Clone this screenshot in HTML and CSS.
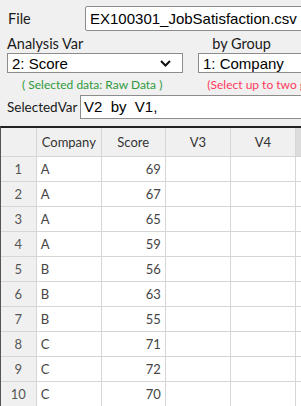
FILE: index.html
```html
<!DOCTYPE html>
<html lang="en">
<head>
    <meta charset="UTF-8">
    <meta name="viewport" content="width=device-width, initial-scale=1.0">
    <title>Data Sheet</title>
    <link rel="stylesheet" href="styles.css">
</head>
<body>
    <div class="panel">
        <div class="file-row">
            <span class="label file-label">File</span>
            <div class="textbox file-box">EX100301_JobSatisfaction.csv</div>
        </div>

        <div class="caption-row">
            <span class="label">Analysis Var</span>
            <span class="label group-label">by Group</span>
        </div>

        <div class="select-row">
            <div class="select var-select">
                <span>2: Score</span>
                <svg class="chevron" width="11" height="7" viewBox="0 0 11 7">
                    <polyline points="1,1 5.5,5.5 10,1" fill="none" stroke="#111" stroke-width="2"/>
                </svg>
            </div>
            <div class="select group-select">
                <span>1: Company</span>
            </div>
        </div>

        <div class="note-row">
            <span class="note-green">( Selected data: Raw Data )</span>
            <span class="note-red">(Select up to two groups)</span>
        </div>

        <div class="selected-row">
            <span class="label selected-label">SelectedVar</span>
            <div class="textbox selected-box">V2  by  V1,</div>
        </div>
    </div>

    <div class="sheet">
        <table class="grid">
            <colgroup>
                <col class="c-num">
                <col class="c-col">
                <col class="c-col2">
                <col class="c-col">
                <col class="c-col">
                <col class="c-col">
            </colgroup>
            <thead>
                <tr>
                    <th></th>
                    <th class="left">Company</th>
                    <th>Score</th>
                    <th>V3</th>
                    <th>V4</th>
                    <th class="active">V5</th>
                </tr>
            </thead>
            <tbody>
                <tr><td class="num">1</td><td>A</td><td class="val">69</td><td></td><td></td><td></td></tr>
                <tr><td class="num">2</td><td>A</td><td class="val">67</td><td></td><td></td><td></td></tr>
                <tr><td class="num">3</td><td>A</td><td class="val">65</td><td></td><td></td><td></td></tr>
                <tr><td class="num">4</td><td>A</td><td class="val">59</td><td></td><td></td><td></td></tr>
                <tr><td class="num">5</td><td>B</td><td class="val">56</td><td></td><td></td><td></td></tr>
                <tr><td class="num">6</td><td>B</td><td class="val">63</td><td></td><td></td><td></td></tr>
                <tr><td class="num">7</td><td>B</td><td class="val">55</td><td></td><td></td><td></td></tr>
                <tr><td class="num">8</td><td>C</td><td class="val">71</td><td></td><td></td><td></td></tr>
                <tr><td class="num">9</td><td>C</td><td class="val">72</td><td></td><td></td><td></td></tr>
                <tr><td class="num">10</td><td>C</td><td class="val">70</td><td></td><td></td><td></td></tr>
            </tbody>
        </table>
    </div>
</body>
</html>
```

FILE: styles.css
```css
html, body {
    margin: 0;
    padding: 0;
    overflow: hidden;
}
body {
    width: 301px;
    height: 406px;
    background-color: #f0f0f0;
    font-family: Lato, "Liberation Sans", sans-serif;
    color: #111;
}
.panel {
    padding: 6px 0 0 0;
    width: 420px;
}
.label {
    font-size: 14.5px;
    line-height: 16px;
    color: #1a1a1a;
    white-space: nowrap;
}
.textbox, .select {
    box-sizing: border-box;
    background-color: white;
    border: 1px solid #8c8c8c;
    font-family: "Liberation Sans", Arial, sans-serif;
    font-size: 15px;
    color: #000;
    white-space: pre;
}
.file-row {
    display: flex;
    align-items: center;
    height: 25px;
}
.file-label {
    width: 77px;
    padding-left: 8px;
}
.file-box {
    width: 260px;
    height: 25px;
    line-height: 23px;
    padding-left: 4px;
    border-radius: 2px;
}
.caption-row {
    display: flex;
    margin-top: 5px;
    height: 17px;
    padding-left: 7px;
}
.group-label {
    margin-left: 129px;
}
.select-row {
    display: flex;
    gap: 15px;
    padding-left: 7px;
}
.select {
    display: flex;
    align-items: center;
    justify-content: space-between;
    height: 20px;
    padding: 0 11px 0 4px;
}
.var-select {
    width: 176px;
}
.group-select {
    width: 160px;
}
.chevron {
    display: block;
}
.note-row {
    display: flex;
    height: 22px;
    align-items: center;
    font-size: 12px;
}
.note-green {
    color: #2f9a3c;
    margin-left: 22px;
}
.note-red {
    color: #ff3a5c;
    margin-left: 45px;
    white-space: nowrap;
}
.selected-row {
    display: flex;
    align-items: center;
    padding-left: 7px;
    height: 24px;
}
.selected-label {
    font-size: 13.5px;
    width: 73px;
    flex-shrink: 0;
}
.selected-box {
    width: 260px;
    flex-shrink: 0;
    height: 24px;
    line-height: 22px;
    padding-left: 3px;
}
.sheet {
    margin-top: 7px;
    border-top: 2px solid #222;
    border-left: 1px solid #555;
    width: 360px;
    background-color: white;
}
.grid {
    border-collapse: collapse;
    table-layout: fixed;
    width: 360px;
    font-size: 13px;
    color: #444;
}
.c-num { width: 33px; }
.c-col { width: 61px; }
.c-col2 { width: 60px; }
.grid th, .grid td {
    border: 1px solid #d6d6d6;
    padding: 0 4px;
    overflow: hidden;
    white-space: nowrap;
}
.grid tr > :first-child {
    border-left: none;
}
.grid thead tr > * {
    border-top: none;
}
.grid th {
    height: 28px;
    background-color: #f0f0f0;
    font-weight: normal;
    color: #333;
    text-align: center;
}
.grid th.left {
    text-align: left;
    padding-left: 5px;
}
.grid th.active {
    background-color: #dcdcdc;
}
.grid td {
    height: 24px;
}
.grid td.num {
    background-color: #f0f0f0;
    text-align: center;
    color: #555;
}
.grid td.val {
    text-align: right;
}
```
